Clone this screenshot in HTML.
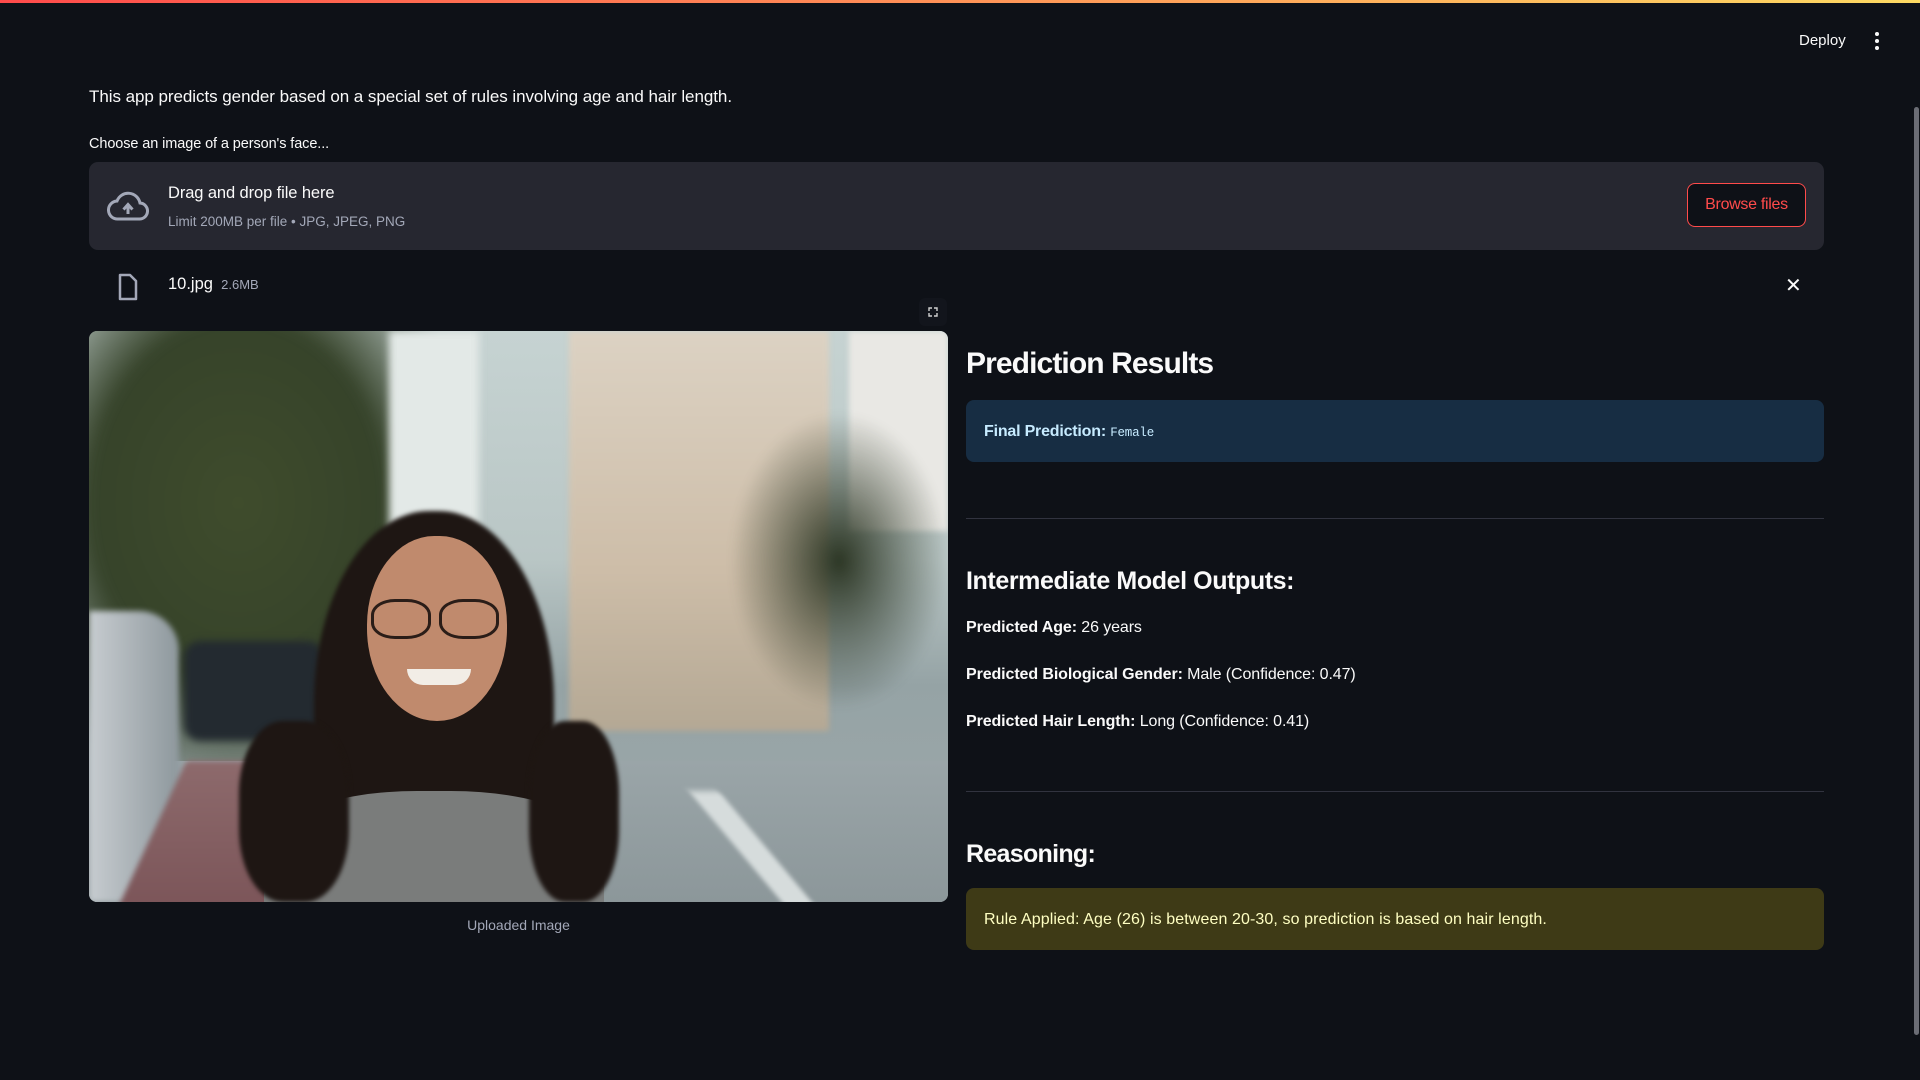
<!DOCTYPE html>
<html><head><meta charset="utf-8"><style>
*{margin:0;padding:0;box-sizing:border-box}
body{width:1920px;height:1080px;background:#0e1117;color:#fafafa;font-family:"Liberation Sans",sans-serif;position:relative;overflow:hidden}
.a{position:absolute;white-space:nowrap}
.topbar{position:absolute;left:0;top:0;width:1920px;height:3px;background:linear-gradient(90deg,#ff4b4b,#fdda63)}
.hr{position:absolute;left:966px;width:858px;height:1px;background:#31333f}
.p{position:absolute}
</style></head><body>
<div class="topbar"></div>
<div class="a" style="left:1799px;top:32px;font-size:15px">Deploy</div>
<div class="a" style="left:1875px;top:32px;width:4px">
 <div style="width:4px;height:4px;border-radius:2px;background:#fafafa;margin-bottom:3px"></div>
 <div style="width:4px;height:4px;border-radius:2px;background:#fafafa;margin-bottom:3px"></div>
 <div style="width:4px;height:4px;border-radius:2px;background:#fafafa"></div>
</div>
<div class="a" style="left:1914px;top:107px;width:5px;height:928px;background:#6b6d75;border-radius:3px"></div>

<div class="a" style="left:89px;top:87px;font-size:17px;letter-spacing:-0.05px">This app predicts gender based on a special set of rules involving age and hair length.</div>
<div class="a" style="left:89px;top:136px;font-size:14.5px;letter-spacing:-0.1px">Choose an image of a person's face...</div>

<div class="a" style="left:89px;top:162px;width:1735px;height:88px;background:#262730;border-radius:9px"></div>
<svg class="a" style="left:107px;top:190px" width="42" height="32" viewBox="0 0 42 32"><path d="M11 29 H32 A8 8 0 0 0 33 13 A12 12 0 0 0 10 11 A9 9 0 0 0 11 29 Z" fill="none" stroke="#a3a8b8" stroke-width="3"/><path d="M21 24 V15 M16.5 19.5 L21 14.5 L25.5 19.5" fill="none" stroke="#a3a8b8" stroke-width="3"/></svg>
<div class="a" style="left:168px;top:184px;font-size:16.5px;letter-spacing:-0.1px">Drag and drop file here</div>
<div class="a" style="left:168px;top:214px;font-size:13.5px;color:#a3a8b8">Limit 200MB per file • JPG, JPEG, PNG</div>
<div class="a" style="left:1687px;top:183px;width:119px;height:44px;border:1.5px solid #ff4b4b;border-radius:8px;background:#0e1117;color:#ff4b4b;font-size:16px;text-align:center;line-height:42px;letter-spacing:-0.3px">Browse files</div>

<svg class="a" style="left:117px;top:273px" width="22" height="28" viewBox="0 0 22 28"><path d="M3 2 H13 L19 8 V26 H3 Z" fill="none" stroke="#a3a8b8" stroke-width="2.5" stroke-linejoin="round"/></svg>
<div class="a" style="left:168px;top:275px;font-size:16.5px">10.jpg <span style="font-size:13px;color:#a3a8b8">&nbsp;2.6MB</span></div>
<div class="a" style="left:1785px;top:273px;font-size:20px;color:#fafafa">✕</div>
<div class="a" style="left:919px;top:298px;width:28px;height:28px;background:#12151c;border-radius:6px"></div>
<svg class="a" style="left:928px;top:307px" width="10" height="10" viewBox="0 0 10 10"><path d="M1 4V1H4 M6 1H9V4 M9 6V9H6 M4 9H1V6" fill="none" stroke="#d0d0d0" stroke-width="1.4"/></svg>

<!-- photo -->
<div class="a" style="left:89px;top:331px;width:859px;height:571px;border-radius:8px;overflow:hidden;background:linear-gradient(180deg,#c6d3d2 0%,#b9c6c5 40%,#95a3a5 62%,#9aa6a8 80%,#8a9598 100%)">
 <div class="p" style="left:-40px;top:-20px;width:420px;height:480px;background:radial-gradient(ellipse at 45% 40%,#3f4c2c 0%,#36432a 45%,rgba(60,70,50,0) 75%);filter:blur(6px)"></div>
 <div class="p" style="left:480px;top:0;width:260px;height:400px;background:linear-gradient(180deg,#dcd2c3,#cdbda8 60%,#b4a894);filter:blur(3px)"></div>
 <div class="p" style="left:300px;top:0;width:90px;height:260px;background:#e3e9e7;filter:blur(4px)"></div>
 <div class="p" style="left:760px;top:0;width:99px;height:200px;background:#e9e8e4;filter:blur(3px)"></div>
 <div class="p" style="left:640px;top:80px;width:220px;height:300px;background:radial-gradient(ellipse,#2b3523 0%,rgba(47,58,37,0) 70%);filter:blur(4px)"></div>
 <div class="p" style="left:0;top:430px;width:859px;height:141px;background:linear-gradient(180deg,#9aa5a8,#8c979a)"></div>
 <div class="p" style="left:0;top:280px;width:90px;height:291px;background:linear-gradient(90deg,#c7ccd0,#8e989d);border-radius:0 40px 0 0;filter:blur(3px)"></div>
 <div class="p" style="left:95px;top:310px;width:140px;height:100px;background:#232a30;border-radius:16px;filter:blur(4px)"></div>
 <div class="p" style="left:60px;top:430px;width:240px;height:160px;background:linear-gradient(180deg,#8d6a6c,#7a5357);transform:skewX(-25deg);filter:blur(3px)"></div>
 <div class="p" style="left:650px;top:460px;width:30px;height:120px;background:#d6dcdc;transform:skewX(40deg);filter:blur(3px)"></div>
 <!-- hair -->
 <div class="p" style="left:225px;top:180px;width:240px;height:400px;background:#1e1613;border-radius:48% 48% 25% 25%;filter:blur(2px)"></div>
 <!-- face -->
 <div class="p" style="left:278px;top:205px;width:140px;height:185px;background:#c08a6d;border-radius:48% 48% 50% 50%"></div>
 <div class="p" style="left:282px;top:268px;width:60px;height:40px;border:3px solid #2a1d18;border-radius:40%"></div>
 <div class="p" style="left:350px;top:268px;width:60px;height:40px;border:3px solid #2a1d18;border-radius:40%"></div>
 <div class="p" style="left:318px;top:338px;width:64px;height:16px;background:#f2ede6;border-radius:0 0 30px 30px"></div>
 <!-- shirt -->
 <div class="p" style="left:175px;top:460px;width:340px;height:130px;background:#7a7c7b;border-radius:45% 45% 0 0"></div>
 <div class="p" style="left:150px;top:390px;width:110px;height:181px;background:#1e1613;border-radius:40%;filter:blur(2px)"></div>
 <div class="p" style="left:440px;top:390px;width:90px;height:181px;background:#1e1613;border-radius:40%;filter:blur(2px)"></div>
</div>
<div class="a" style="left:89px;top:917px;width:859px;text-align:center;font-size:14px;color:#a3a8b8">Uploaded Image</div>

<div class="a" style="left:966px;top:347px;font-size:30px;font-weight:bold;letter-spacing:-0.9px">Prediction Results</div>
<div class="a" style="left:966px;top:400px;width:858px;height:62px;background:#172d43;border-radius:8px"></div>
<div class="a" style="left:984px;top:423px;font-size:16px;color:#c7ebff;font-weight:bold;letter-spacing:-0.2px">Final Prediction: <span style="font-family:'Liberation Mono',monospace;font-weight:normal;font-size:12.5px">Female</span></div>
<div class="hr" style="top:518px"></div>
<div class="a" style="left:966px;top:567px;font-size:25px;font-weight:bold;letter-spacing:-0.4px">Intermediate Model Outputs:</div>
<div class="a" style="left:966px;top:619px;font-size:16px;letter-spacing:-0.1px"><b>Predicted Age:</b> 26 years</div>
<div class="a" style="left:966px;top:666px;font-size:16px;letter-spacing:-0.1px"><b>Predicted Biological Gender:</b> Male (Confidence: 0.47)</div>
<div class="a" style="left:966px;top:713px;font-size:16px;letter-spacing:-0.1px"><b>Predicted Hair Length:</b> Long (Confidence: 0.41)</div>
<div class="hr" style="top:791px"></div>
<div class="a" style="left:966px;top:840px;font-size:25px;font-weight:bold;letter-spacing:-0.7px">Reasoning:</div>
<div class="a" style="left:966px;top:888px;width:858px;height:62px;background:#3e3a16;border-radius:8px"></div>
<div class="a" style="left:984px;top:911px;font-size:16px;color:#ffffc2;letter-spacing:0.1px">Rule Applied: Age (26) is between 20-30, so prediction is based on hair length.</div>
</body></html>
